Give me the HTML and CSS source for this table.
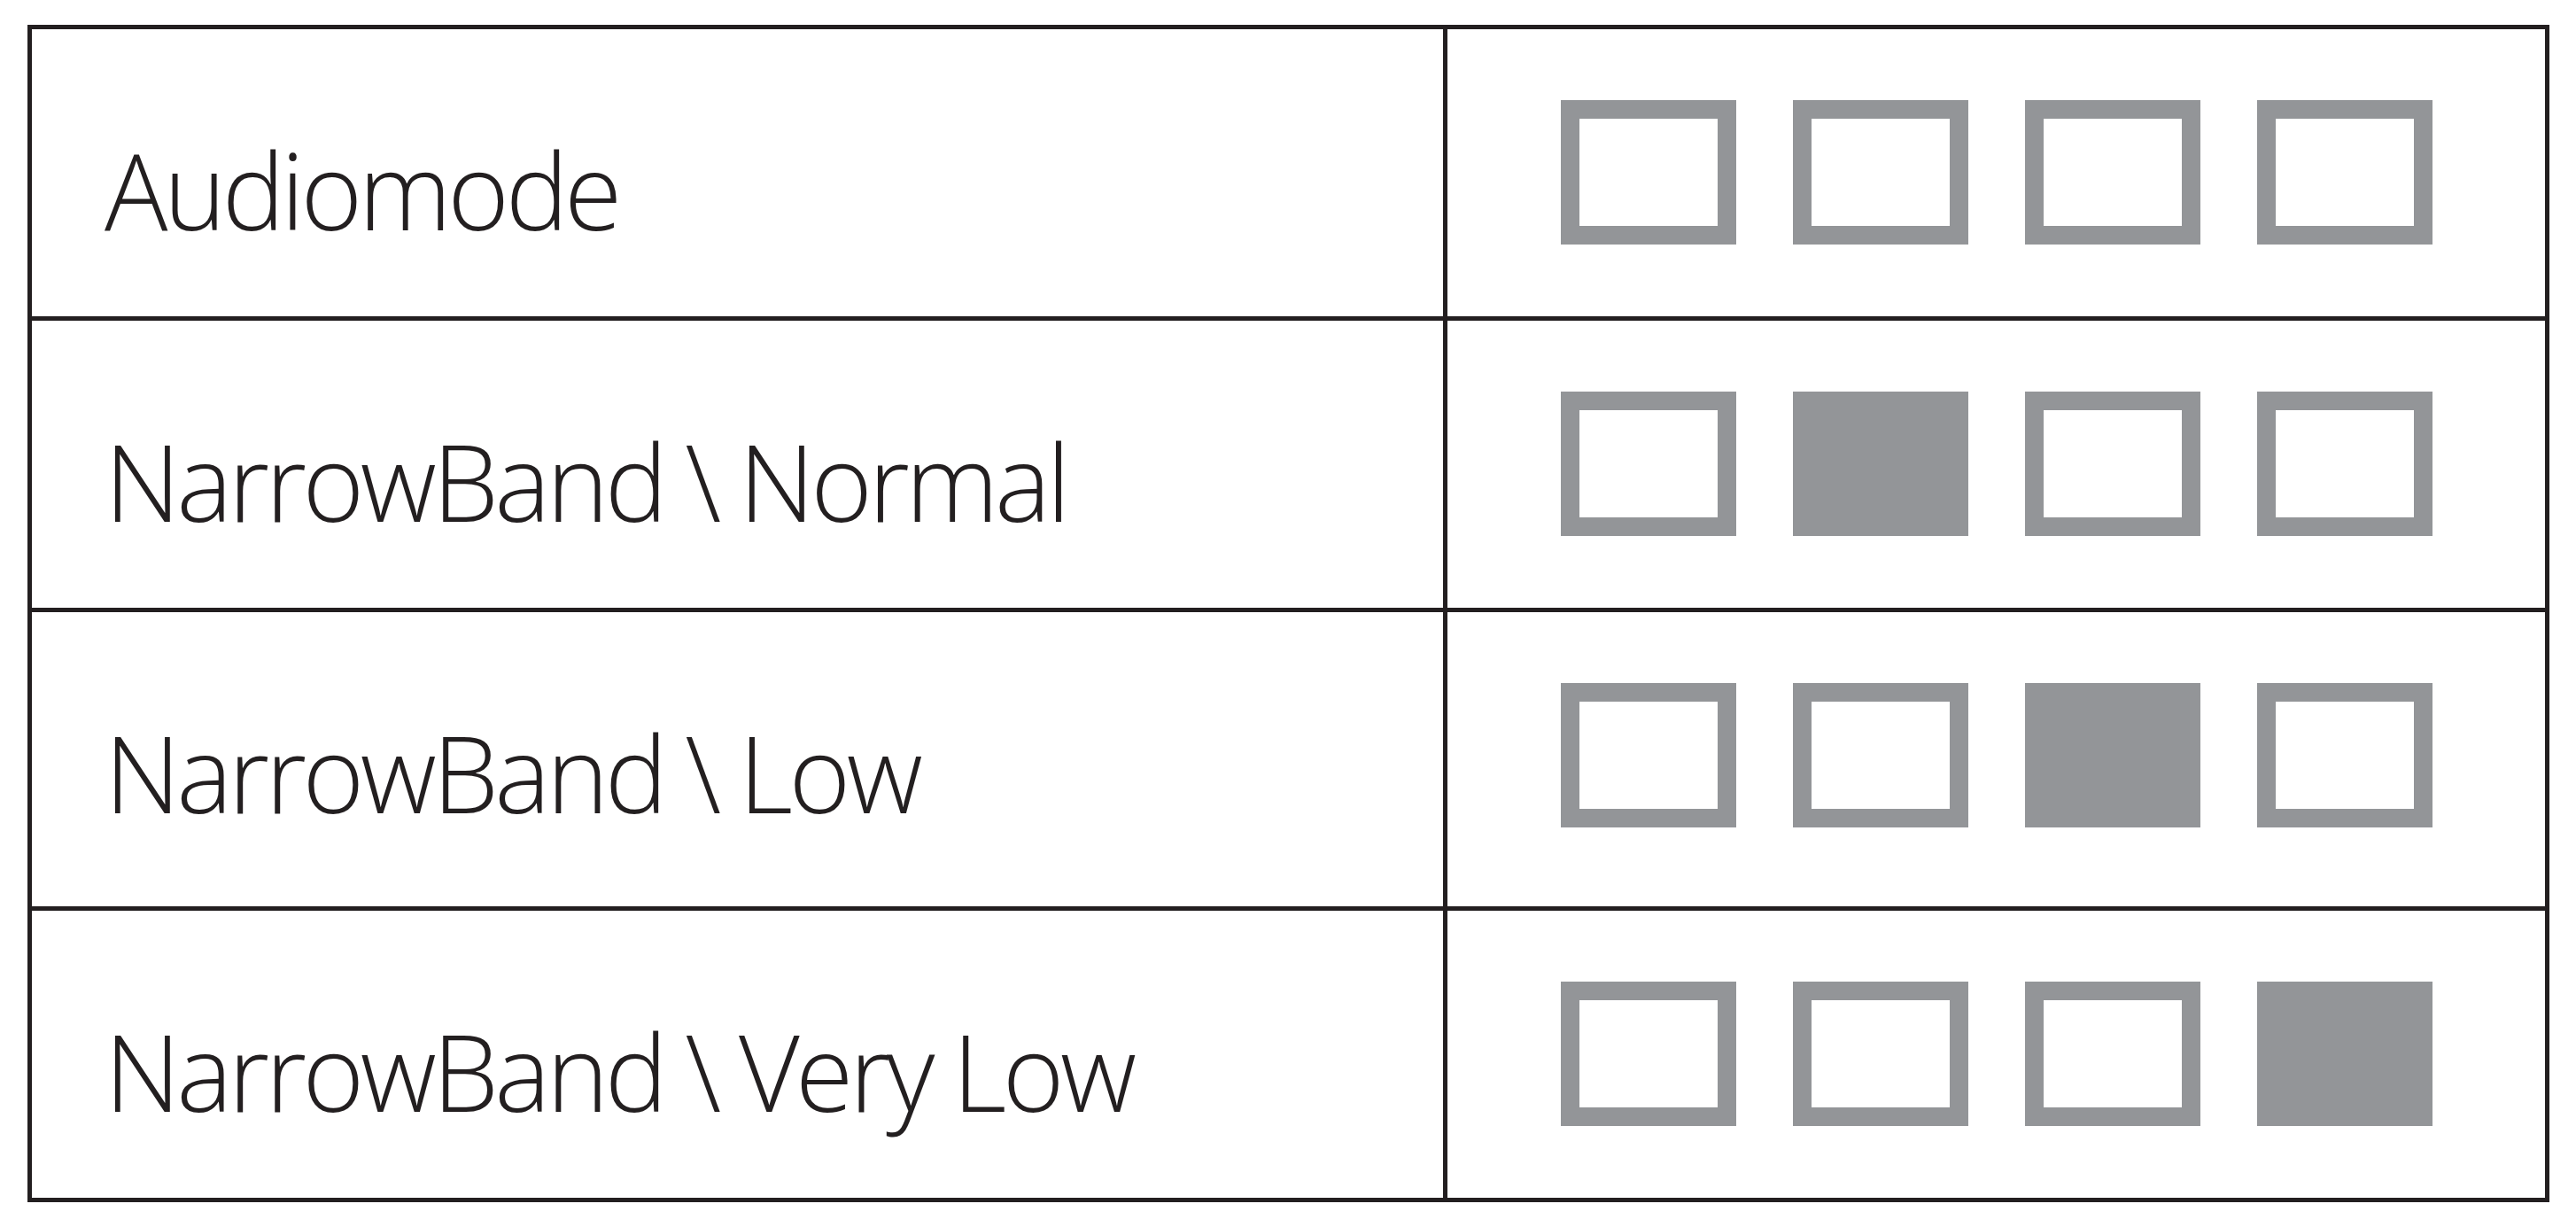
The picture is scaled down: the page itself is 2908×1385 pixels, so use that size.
FILE: index.html
```html
<!DOCTYPE html>
<html lang="en">
<head>
<meta charset="utf-8">
<title>Audiomode</title>
<link rel="stylesheet" href="styles.css">
</head>
<body>
<div class="table">
  <div class="row">
    <div class="label">Audiomode</div>
    <div class="leds">
      <span class="led"></span><span class="led"></span><span class="led"></span><span class="led"></span>
    </div>
  </div>
  <div class="row">
    <div class="label">NarrowBand \ Normal</div>
    <div class="leds">
      <span class="led"></span><span class="led on"></span><span class="led"></span><span class="led"></span>
    </div>
  </div>
  <div class="row row-tall">
    <div class="label">NarrowBand \ Low</div>
    <div class="leds">
      <span class="led"></span><span class="led"></span><span class="led on"></span><span class="led"></span>
    </div>
  </div>
  <div class="row">
    <div class="label">NarrowBand \ Very Low</div>
    <div class="leds">
      <span class="led"></span><span class="led"></span><span class="led"></span><span class="led on"></span>
    </div>
  </div>
</div>
</body>
</html>
```
FILE: styles.css
```css
html, body {
  margin: 0;
  padding: 0;
  background: #ffffff;
}

body {
  font-family: "Open Sans", "Noto Sans", "Liberation Sans", sans-serif;
  color: #231f20;
}

.table {
  margin: 28px 0 0 31px;
  width: 2847px;
  box-sizing: border-box;
  border: 5px solid #231f20;
  display: flex;
  flex-direction: column;
}

.row {
  display: grid;
  grid-template-columns: 1598px 1fr;
  height: 324px;
}

.row + .row {
  border-top: 5px solid #231f20;
}

.row-tall {
  height: 332px;
}

.label {
  box-sizing: border-box;
  border-right: 5px solid #231f20;
  padding: 100px 0 0 82px;
  font-size: 119px;
  font-weight: 300;
  line-height: normal;
  letter-spacing: -4.5px;
  word-spacing: -2px;
  white-space: nowrap;
}

.leds {
  display: flex;
  justify-content: center;
  align-items: flex-start;
  gap: 64px;
  padding-top: 80px;
}

.led {
  display: block;
  width: 198px;
  height: 163px;
  box-sizing: border-box;
  border: 21px solid #939598;
}

.led.on {
  background: #939598;
}
```
